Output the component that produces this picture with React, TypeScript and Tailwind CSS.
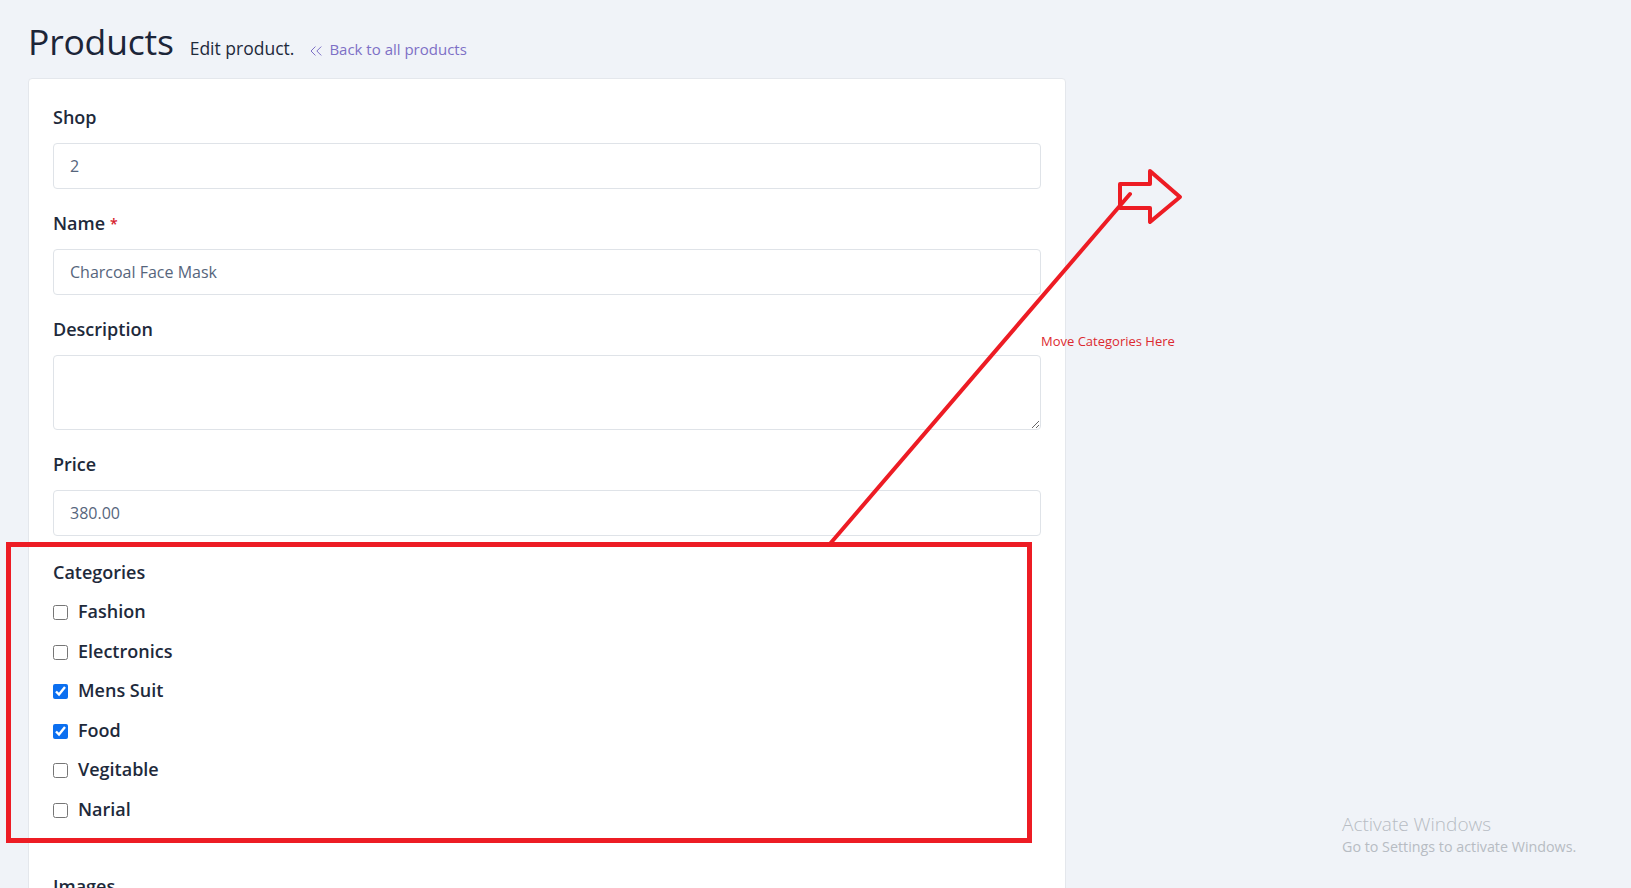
import { ChevronsLeft } from "lucide-react";

const categories = [
  { name: "Fashion", checked: false },
  { name: "Electronics", checked: false },
  { name: "Mens Suit", checked: true },
  { name: "Food", checked: true },
  { name: "Vegitable", checked: false },
  { name: "Narial", checked: false },
];

function Field({ label, required, children }: { label: string; required?: boolean; children: React.ReactNode }) {
  return (
    <div className="flex flex-col">
      <label className="text-[18px] leading-[27px] font-semibold text-[#1e2a3b] mb-3">
        {label}
        {required && <span className="text-[#d6202a] text-[14px] align-top ml-[5px]">*</span>}
      </label>
      {children}
    </div>
  );
}

export default function App() {
  return (
    <div className="relative min-h-[888px] h-[888px] overflow-hidden bg-[#f0f3f8] font-['Open_Sans',sans-serif]">
      <div className="pl-[28px] pt-[24px]">
        <div className="flex items-baseline h-[52px] leading-none">
          <h1 className="text-[35.5px] font-normal text-[#1c2538] tracking-[-0.2px]">Products</h1>
          <span className="ml-[16px] text-[17.5px] text-[#1e2a3b]">Edit product.</span>
          <a className="ml-[12px] flex items-baseline text-[15px] text-[#7d70c6]" href="#">
            <ChevronsLeft className="w-[20px] h-[20px] self-center mr-[3px] -translate-y-[1px]" strokeWidth={1.2} />
            Back to all products
          </a>
        </div>
        <div className="mt-[2px] w-[1038px] bg-white border border-[#e4e7ec] rounded-[4px] px-[24px] pt-[25px] pb-10">
          <div className="flex flex-col gap-[21px]">
            <Field label="Shop">
              <input
                className="h-[46px] border border-[#dfe3e8] rounded-[4px] px-4 text-[16px] text-[#56657c] outline-none"
                defaultValue="2"
              />
            </Field>
            <Field label="Name" required>
              <input
                className="h-[46px] border border-[#dfe3e8] rounded-[4px] px-4 text-[16px] text-[#56657c] outline-none"
                defaultValue="Charcoal Face Mask"
              />
            </Field>
            <Field label="Description">
              <textarea className="h-[75px] border border-[#dfe3e8] rounded-[4px] px-4 py-2 text-[16px] text-[#56657c] outline-none block" />
            </Field>
            <Field label="Price">
              <input
                className="h-[46px] border border-[#dfe3e8] rounded-[4px] px-4 text-[16px] text-[#56657c] outline-none"
                defaultValue="380.00"
              />
            </Field>
            <div className="flex flex-col mt-[2px]">
              <div className="text-[18px] leading-[27px] font-semibold text-[#1e2a3b]">Categories</div>
              <div className="flex flex-col gap-[12.6px] mt-[12px]">
                {categories.map((c) => (
                  <label key={c.name} className="flex items-center h-[27px]">
                    <input
                      type="checkbox"
                      defaultChecked={c.checked}
                      className="w-[15px] h-[15px] m-0 accent-[#0b6ff0] translate-y-[1px]"
                    />
                    <span className="ml-[10px] text-[18px] font-semibold text-[#1e2a3b]">{c.name}</span>
                  </label>
                ))}
              </div>
            </div>
            <div className="mt-[29px] text-[18px] leading-[27px] font-semibold text-[#1e2a3b]">Images</div>
          </div>
        </div>
      </div>

      {/* annotation overlay */}
      <svg className="absolute inset-0 pointer-events-none" width="1631" height="888">
        <rect x="8.5" y="544.5" width="1021" height="296" fill="none" stroke="#ed1c24" strokeWidth="5" />
        <line x1="829" y1="545" x2="1130" y2="194" stroke="#ed1c24" strokeWidth="4" strokeLinecap="round" />
        <polygon
          points="1120,184 1150,184 1150,171 1180,197 1150,222 1150,208 1120,208"
          fill="none"
          stroke="#ed1c24"
          strokeWidth="4"
          strokeLinejoin="round"
        />
      </svg>
      <div className="absolute left-[1041px] top-[332px] text-[13px] text-[#dc2a30] whitespace-nowrap">
        Move Categories Here
      </div>

      <div className="absolute left-[1342px] top-[811px] text-[#b7bcc3] font-light whitespace-nowrap">
        <div className="text-[19px] leading-[26px]">Activate Windows</div>
        <div className="text-[14.3px] leading-[20px] font-normal">Go to Settings to activate Windows.</div>
      </div>
    </div>
  );
}
